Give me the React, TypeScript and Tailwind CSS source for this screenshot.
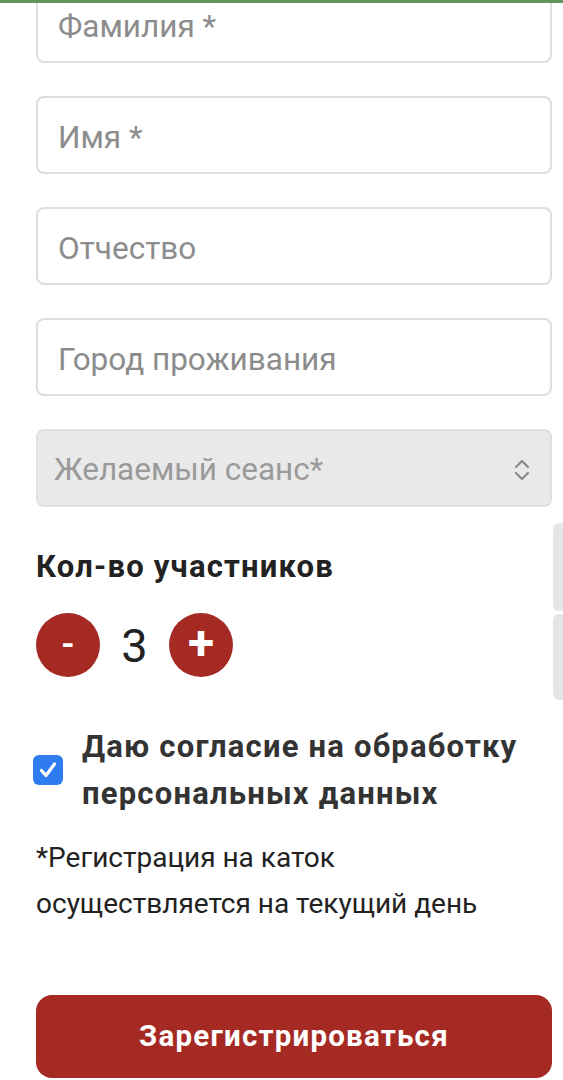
import { useState } from 'react'

const fields = ['Фамилия *', 'Имя *', 'Отчество', 'Город проживания']

export default function App() {
  const [count, setCount] = useState(3)
  const [agree, setAgree] = useState(true)

  return (
    <div className="relative min-h-[1080px] overflow-hidden bg-white font-['Roboto',sans-serif]">
      {/* top accent line */}
      <div className="absolute inset-x-0 top-0 z-10 h-[3px] bg-[#5f955f]" />

      {/* side tabs */}
      <div className="absolute right-0 top-[523px] h-[88px] w-[10px] rounded-l-md bg-[#e6e6e6]" />
      <div className="absolute right-0 top-[614px] h-[86px] w-[10px] rounded-l-md bg-[#e6e6e6]" />

      <form className="flex flex-col pl-[36px] pr-[11px]">
        <div className="-mt-[15px] flex flex-col gap-[33px]">
          {fields.map((f) => (
            <input
              key={f}
              placeholder={f}
              className="h-[78px] w-full rounded-lg border-2 border-[#dedede] bg-white px-[20px] pt-[4px] text-[31.5px] text-[#333] outline-none placeholder:text-[#8c8c8c]"
            />
          ))}
          <div className="flex h-[78px] w-full items-center justify-between rounded-lg border-2 border-[#e0e0e0] bg-[#e9e9e9] pl-[16px] pr-[20px] pt-[3px]">
            <span className="text-[31.5px] text-[#9a9a9a]">Желаемый сеанс*</span>
            <svg width="16" height="24" viewBox="0 0 16 24" fill="none" stroke="#8a8a8a" strokeWidth="2.2" strokeLinecap="round" strokeLinejoin="round">
              <path d="M2 9 L8 3 L14 9" />
              <path d="M2 15 L8 21 L14 15" />
            </svg>
          </div>
        </div>

        <h3 className="mt-[42px] text-[31px] font-bold leading-[36px] tracking-[1.2px] text-[#222]">Кол-во участников</h3>

        <div className="mt-[28px] flex items-center">
          <button
            type="button"
            onClick={() => setCount(Math.max(1, count - 1))}
            className="flex h-[64px] w-[64px] items-center justify-center rounded-full bg-[#a52a24] pb-[4px] text-[34px] font-bold text-white"
          >
            -
          </button>
          <span className="w-[69px] text-center text-[47px] font-normal leading-none text-[#222]">{count}</span>
          <button
            type="button"
            onClick={() => setCount(count + 1)}
            className="flex h-[64px] w-[64px] items-center justify-center rounded-full bg-[#a52a24] pb-[4px] text-[48px] font-bold text-white"
          >
            +
          </button>
        </div>

        <label className="mt-[46px] flex items-center gap-[19px]">
          <button
            type="button"
            onClick={() => setAgree(!agree)}
            className={`-ml-[3px] flex h-[30px] w-[30px] shrink-0 items-center justify-center rounded-[6px] ${agree ? 'bg-[#2f7bf0]' : 'border-2 border-[#999] bg-white'}`}
          >
            {agree && (
              <svg width="22" height="22" viewBox="0 0 22 22" fill="none" stroke="white" strokeWidth="3.2" strokeLinecap="round" strokeLinejoin="round">
                <path d="M4.5 11.5 L9 16.5 L17.5 5" />
              </svg>
            )}
          </button>
          <span className="text-[31px] font-bold leading-[47px] tracking-[1.2px] text-[#333]">
            Даю согласие на обработку персональных данных
          </span>
        </label>

        <p className="mt-[18px] text-[28px] leading-[46px] text-[#222]">
          *Регистрация на каток
          <br />
          осуществляется на текущий день
        </p>

        <button
          type="button"
          className="mt-[68px] h-[83px] w-full rounded-2xl bg-[#a52a24] text-[29.5px] font-bold tracking-[1.2px] text-white"
        >
          Зарегистрироваться
        </button>
      </form>
    </div>
  )
}
